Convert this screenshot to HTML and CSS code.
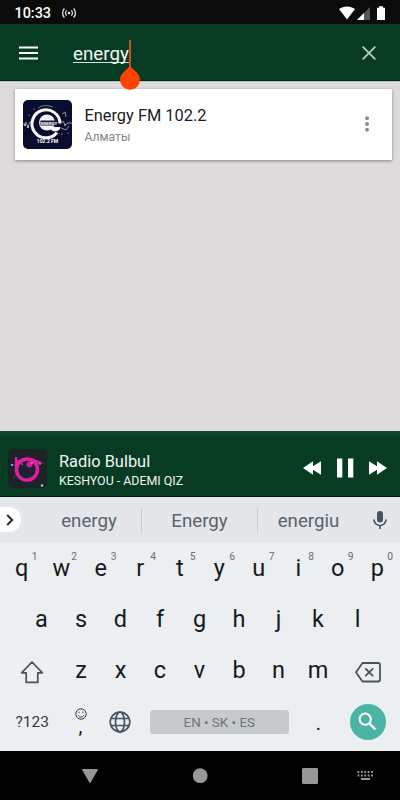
FILE: index.html
```html
<!DOCTYPE html>
<html lang="en">
<head>
<meta charset="utf-8">
<title>Radio search</title>
<link rel="stylesheet" href="styles.css">
</head>
<body>
<div class="screen">
  <div class="status">
    <span class="clock">10:33</span>
    <svg class="cast" width="16" height="12" viewBox="0 0 16 12" fill="none" stroke="#e4e4e4" stroke-width="1.3"><circle cx="8" cy="6" r="1.3" fill="#e4e4e4" stroke="none"/><path d="M5.700 3.400a3.700 3.700 0 0 0 0 5.200M10.300 3.400a3.700 3.700 0 0 1 0 5.200M3.400 1.500a6.500 6.500 0 0 0 0 9M12.600 1.500a6.500 6.500 0 0 1 0 9"/></svg>
    <svg class="signals" width="48" height="16" viewBox="0 0 48 16"><path d="M1 3.100C5.600-.3 12.400-.3 17 3.100L9 13.400z" fill="#fff"/><path d="M32 1v13H19z" fill="#555"/><path d="M26 7v7h-7z" fill="#fff"/><path d="M41 .3h4v1.500h2V14h-8V1.800h2z" fill="#fff"/></svg>
  </div>
  <header class="toolbar">
    <svg width="19" height="14" viewBox="0 0 19 14" fill="#fff"><path d="M0 .5h19v2H0zM0 6h19v2H0zM0 11.500h19v2H0z"/></svg>
    <div class="query"><span>energy</span><i class="caret"></i>
      <svg class="handle" width="22" height="24" viewBox="0 0 22 24"><path d="M11 0l6.800 6.400a10 10 0 1 1-13.600 0z" fill="#fb4200"/></svg>
    </div>
    <svg class="clear" width="14" height="14" viewBox="0 0 14 14" stroke="#b4cdbf" stroke-width="1.800"><path d="M.7.700l12.600 12.600M13.300.7L.7 13.300"/></svg>
  </header>
  <main class="results">
    <div class="card">
      <svg class="cover" width="49" height="49" viewBox="0 0 49 49">
        <rect width="49" height="49" rx="5" fill="#080c2d"/>
        <g fill="none" stroke="#aeb1c3" stroke-width=".8"><path d="M0 24h2l1-2 2 5 2-5h3M37 23l3-2 2 4 3-2h4M38 28l5 2 3-4M39 14l3-2 1 5"/></g>
        <g fill="#dcdeea"><circle cx="2" cy="25" r="1"/><circle cx="5" cy="27" r="1"/><circle cx="42" cy="25" r=".8"/><circle cx="45" cy="33" r=".6"/><circle cx="11" cy="9" r=".6"/><circle cx="39" cy="34" r=".6"/><circle cx="6" cy="15" r=".5"/></g>
        <path d="M15 8c4-3 10-3 15-1" stroke="#777c98" fill="none"/>
        <path d="M34 32.500A14 14 0 1 1 37 23.500" fill="none" stroke="#f4f4f8" stroke-width="3"/>
        <circle cx="24" cy="22.500" r="8" fill="#f1f1f5"/>
        <path d="M26 27h11.500c-.5 4-4 5-8 4z" fill="#f4f4f8"/>
        <rect x="17.500" y="20.500" width="17" height="5" fill="#15193a"/>
        <text x="26" y="24.600" text-anchor="middle" class="cover-name">ENERGY</text>
        <text x="24.500" y="43" text-anchor="middle" class="cover-freq">102.2 FM</text>
      </svg>
      <div class="station"><div class="name">Energy FM 102.2</div><div class="city">Алматы</div></div>
      <svg class="more" width="4" height="16" viewBox="0 0 4 16" fill="#8c8c8c"><circle cx="2" cy="2.200" r="2"/><circle cx="2" cy="8" r="2"/><circle cx="2" cy="13.800" r="2"/></svg>
    </div>
  </main>
  <section class="player">
    <svg class="art" width="39" height="39" viewBox="0 0 39 39">
      <defs><radialGradient id="night"><stop offset="0" stop-color="#1d2138"/><stop offset="1" stop-color="#1d2324"/></radialGradient></defs>
      <rect width="39" height="39" rx="5" fill="url(#night)"/>
      <path d="M3 16h9M27 15l9-1M5 29l6-5" stroke="#44505e" stroke-width=".8"/>
      <circle cx="19" cy="20.500" r="10.500" fill="none" stroke="#e91a9d" stroke-width="3.600"/>
      <path d="M8 8v10M7 12c6 2 8-1 13-2s8 3 13 4" fill="none" stroke="#e91a9d" stroke-width="2.400"/>
      <circle cx="21.500" cy="15.500" r="3" fill="#d11d95"/>
      <path d="M11 25c2 5 8 6 12 3" fill="none" stroke="#6c3d8d" stroke-width="1"/>
      <g fill="#8cdde4"><circle cx="4" cy="16" r="1"/><circle cx="34" cy="36.500" r="1.200"/><circle cx="24" cy="14" r=".8"/><circle cx="14" cy="15" r=".7"/><circle cx="32" cy="15" r=".8"/></g>
    </svg>
    <div class="track"><div class="title">Radio Bulbul</div><div class="song">KESHYOU - ADEMI QIZ</div></div>
    <svg class="controls" width="84" height="20" viewBox="0 0 84 20" fill="#fff"><path d="M0 10l10-6.800v5L18 3.200v13.600l-8-5v5zM34 .5h5.300v19H34zM45 .5h5.300v19H45zM66 3.200l8 5v-5L84 10l-10 6.800v-5l-8 5z"/></svg>
  </section>
  <section class="suggestions">
    <div class="expand"><svg width="8" height="12" viewBox="0 0 8 12" fill="none" stroke="#222e35" stroke-width="2"><path d="M1.200 1l5 5-5 5"/></svg></div>
    <span class="word first">energy</span><span class="word">Energy</span><span class="word last">energiu</span>
    <svg class="mic" width="14" height="19" viewBox="0 0 14 19"><rect x="4" y="0" width="6" height="11.500" rx="3" fill="#47545c"/><path d="M1 8.500a6 6 0 0 0 12 0M7 14.500V18" fill="none" stroke="#47545c" stroke-width="1.700"/></svg>
  </section>
  <section class="keyboard">
    <div class="row">
      <b class="key">q<sup>1</sup></b><b class="key">w<sup>2</sup></b><b class="key">e<sup>3</sup></b><b class="key">r<sup>4</sup></b><b class="key">t<sup>5</sup></b><b class="key">y<sup>6</sup></b><b class="key">u<sup>7</sup></b><b class="key">i<sup>8</sup></b><b class="key">o<sup>9</sup></b><b class="key">p<sup>0</sup></b>
    </div>
    <div class="row">
      <b class="key">a</b><b class="key">s</b><b class="key">d</b><b class="key">f</b><b class="key">g</b><b class="key">h</b><b class="key">j</b><b class="key">k</b><b class="key">l</b>
    </div>
    <div class="row">
      <span class="wide"><svg class="low" width="24" height="24" viewBox="0 0 24 24" fill="none" stroke="#47545c" stroke-width="1.700" stroke-linejoin="round"><path d="M12 2L1.600 12.800H6.200V22.300H17.800V12.800H22.400z"/></svg></span>
      <b class="key">z</b><b class="key">x</b><b class="key">c</b><b class="key">v</b><b class="key">b</b><b class="key">n</b><b class="key">m</b>
      <span class="wide"><svg class="low erase" width="26" height="22" viewBox="0 0 26 22" fill="none" stroke="#47545c" stroke-width="1.800" stroke-linejoin="round"><path d="M7.500 2H23q2 0 2 2v14.500q0 2-2 2H7.500L1 11.200zM10.300 7.300l7.800 7.800M18.100 7.300l-7.800 7.800"/></svg></span>
    </div>
    <div class="row bottom">
      <span class="wide symbols">?123</span>
      <span class="key comma"><svg width="12" height="12" viewBox="0 0 12 12" fill="none" stroke="#333d43"><circle cx="6" cy="6" r="5.200"/><path d="M3.200 7.300c1 2.300 4.600 2.300 5.600 0"/><path d="M4 3.600v1.500M8 3.600v1.500"/></svg><em>,</em></span>
      <span class="key"><svg class="globe" width="22" height="22" viewBox="0 0 22 22" fill="none" stroke="#47545c" stroke-width="1.700"><circle cx="11" cy="11" r="9.800"/><ellipse cx="11" cy="11" rx="4.500" ry="9.800"/><path d="M2 7.500h18M2 14.500h18"/></svg></span>
      <span class="space">EN • SK • ES</span>
      <span class="key dot">.</span>
      <span class="wide"><span class="go"><svg width="19" height="19" viewBox="0 0 19 19" fill="none" stroke="#fff" stroke-width="2"><circle cx="7.200" cy="7.200" r="5.600"/><path d="M11.300 11.300l6.200 6.200" stroke-width="2.400"/></svg></span></span>
    </div>
  </section>
  <nav class="navbar">
    <svg width="400" height="49" viewBox="0 0 400 49" fill="#979797"><path d="M82.500 18h15q.8 0 .4.800l-7.400 13q-.5.800-1 0l-7.400-13q-.4-.8.400-.8z"/><circle cx="200.200" cy="24.700" r="7.400"/><rect x="302" y="17" width="16" height="16" rx="1.200"/><path d="M357.500 21H373M357.500 24.500H373" stroke="#979797" stroke-width="2" stroke-dasharray="1.800 1.600"/><rect x="361" y="27" width="9" height="2"/></svg>
  </nav>
</div>
</body>
</html>
```
FILE: styles.css
```css
* { box-sizing: border-box; }
body { margin: 0; font-family: Roboto, "Liberation Sans", sans-serif; }
svg { display: block; flex: none; }
.screen { width: 400px; height: 800px; display: flex; flex-direction: column; overflow: hidden; background: #000; }

.status { height: 24px; background: #0b0b0b; display: flex; align-items: center; padding: 2px 14px 0 14.500px; }
.clock { color: #fff; font-size: 14.400px; font-weight: 500; width: 46.500px; white-space: nowrap; }
.signals { margin: 1px 0 0 auto; }

.toolbar { height: 57px; background: #083c22; border-bottom: 1px solid #052913; display: flex; align-items: center; padding: 1px 24px 0 19px; }
.query { position: relative; margin-left: 35px; color: #f5f8f6; font-size: 18.800px; line-height: 22px; }
.query span { display: block; border-bottom: 1px solid #d5e0d9; height: 20px; margin-top: 1px; line-height: 23px; }
.caret { position: absolute; right: -2px; top: -2px; width: 2px; height: 27px; background: #c35026; }
.handle { position: absolute; right: -12px; top: 24px; z-index: 2; }
.clear { margin-left: auto; }

.results { height: 350px; background: #dedbdc; padding: 7px 8px 0 15px; border-top: 1px solid #b3c4b9; }
.card { height: 71px; background: #fff; box-shadow: 0 1px 3px rgba(0, 0, 0, .4); display: flex; align-items: center; padding: 0 23px 0 8.400px; }
.cover { margin-bottom: 1px; }
.cover-name { font: 700 4.300px Roboto, sans-serif; fill: #fff; }
.cover-freq { font: 700 5px Roboto, sans-serif; fill: #fff; }
.station { margin: 2px 0 0 12px; }
.name { color: #1c1c1c; font-size: 16.400px; line-height: 22px; white-space: nowrap; }
.city { color: #858585; font-size: 12.200px; line-height: 18px; margin-top: 1px; }
.more { margin: 0 0 1px auto; }

.player { height: 66px; background: linear-gradient(#194a31, #083c22 7px); border-bottom: 1px solid #03170b; display: flex; align-items: center; padding: 9px 13px 0 8px; }
.track { margin: 5px 0 0 12px; color: #f1f5f2; white-space: nowrap; }
.title { font-size: 16.400px; line-height: 20px; }
.song { font-size: 12.400px; line-height: 17px; }
.controls { margin: 0 0 0 auto; }

.suggestions { height: 44px; background: #e3e7ea; display: flex; align-items: center; padding-top: 2px; }
.expand { width: 21px; height: 25px; background: #fff; border-radius: 0 12px 12px 0; display: flex; align-items: center; padding-left: 6px; margin-bottom: 1px; }
.word { width: 116px; height: 25px; line-height: 27px; text-align: center; color: #58646b; font-size: 18.700px; border-left: 1px solid #c6cccf; }
.first { width: 104px; margin-left: 16px; border: 0; }
.last { width: 102px; }
.mic { margin-left: 14px; }

.keyboard { height: 210px; background: #ebeff2; border-top: 1px solid #e1e5e8; padding: 1px 1px 0 0; }
.row { height: 51px; display: flex; justify-content: center; align-items: center; }
.key { position: relative; width: 39.500px; height: 51px; line-height: 50px; text-align: center; font-size: 23.500px; font-weight: 400; color: #15191b; flex: none; }
.key sup { position: absolute; right: 4px; top: 8px; font-size: 10.300px; line-height: 12px; color: #667077; }
.wide { width: 59px; display: flex; justify-content: center; align-items: center; flex: none; }
.low { margin-top: 2px; }
.erase { margin-left: 2px; }
.symbols { font-size: 15.500px; color: #333e44; padding: 1px 0 0 2px; }
.comma { display: flex; flex-direction: column; align-items: center; padding-top: 12px; }
.comma em { font-style: normal; font-size: 20px; line-height: 12px; }
.globe { margin: 15px auto 0; }
.space { width: 139px; height: 24px; margin: 0 10px; background: #c5cacd; border-radius: 3px; color: #6c7478; font-size: 13.400px; line-height: 25px; text-align: center; flex: none; }
.dot { font-size: 20px; line-height: 54px; }
.go { width: 36px; height: 36px; border-radius: 50%; background: #4bb4a7; display: flex; align-items: center; justify-content: center; }
.navbar { height: 49px; background: #000; }
```
